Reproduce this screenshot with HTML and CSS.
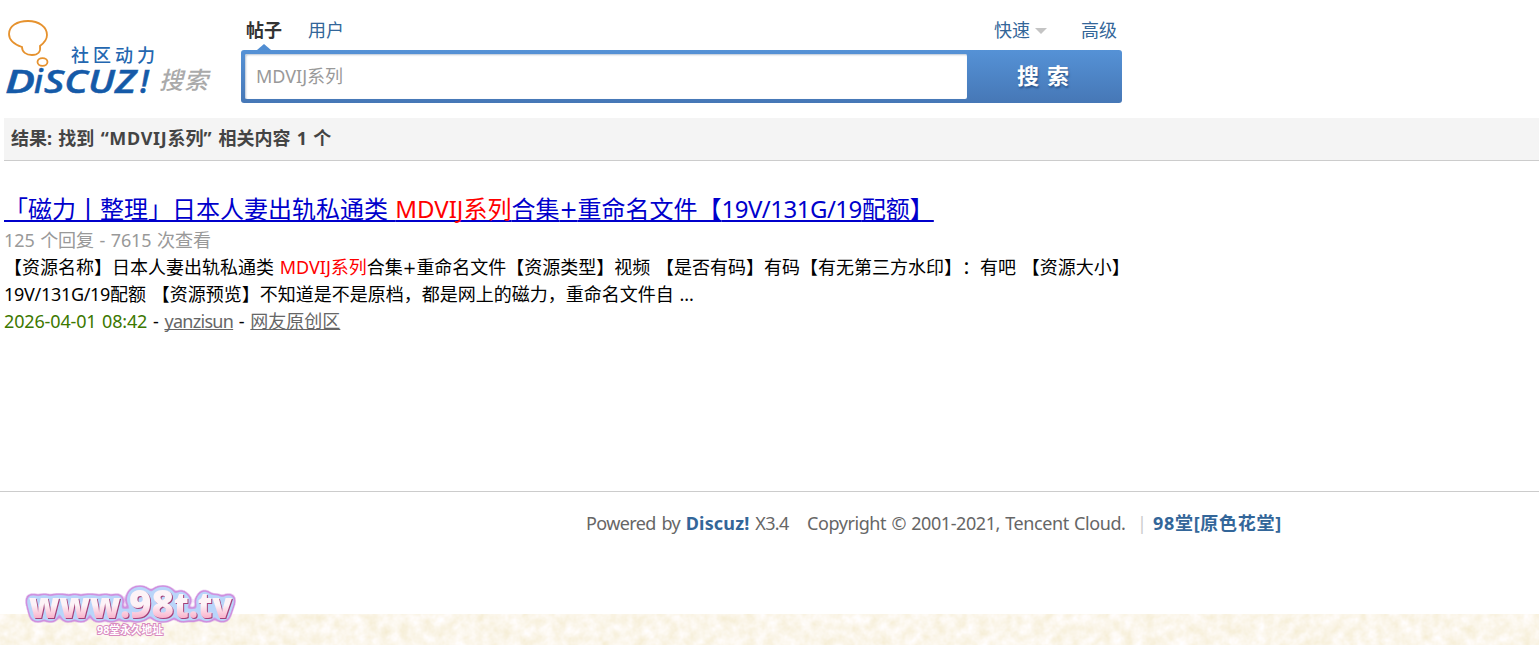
FILE: index.html
```html
<!DOCTYPE html>
<html lang="zh-CN">
<head>
  <meta charset="utf-8">
  <title>搜索 - Discuz!</title>
  <link rel="stylesheet" href="styles.css">
</head>
<body>
  <header class="header">
    <a class="logo" href="#">
      <svg width="220" height="90" viewBox="0 14 220 90">
        <g fill="none" stroke="#e6922e" stroke-width="1.800">
          <path d="M22 47 C13 44 9 39 9 34 C9 26 17 21 28 21 C39 21 47 27 47 35 C47 40 44 43 40 46 C41 52 38 55 32 55 C26 55 22 52 22 47 Z"/>
          <ellipse cx="42.500" cy="62" rx="5" ry="3.800"/>
        </g>
        <g class="logo-name">
          <text x="5" y="93" textLength="30" lengthAdjust="spacingAndGlyphs">D</text>
          <text x="34" y="93">i</text>
          <text x="44" y="93" textLength="92" lengthAdjust="spacingAndGlyphs">SCUZ</text>
          <text x="140" y="93">!</text>
        </g>
        <text class="logo-slogan" x="71" y="62" textLength="84">社区动力</text>
        <text class="logo-search" x="159" y="89" textLength="49">搜索</text>
      </svg>
    </a>
    <form class="search">
      <nav class="tabs">
        <a class="tab active" href="#">帖子</a>
        <a class="tab" href="#">用户</a>
        <a class="tab quick" href="#">快速</a>
        <a class="tab" href="#">高级</a>
      </nav>
      <div class="search-bar">
        <div class="search-input">MDVIJ系列</div>
        <button type="button">搜 索</button>
      </div>
    </form>
  </header>

  <h2 class="result-title">结果: 找到 <span class="kw">“MDVIJ</span>系列<span class="kw">”</span> 相关内容 1 个</h2>

  <main class="result">
    <h3><a href="#">「磁力丨整理」日本人妻出轨私通类 <em>MDVIJ系列</em>合集<span class="plus">+</span>重命名文件【<span class="code">19V/131G/19</span>配额】</a></h3>
    <p class="count">125 个回复 - 7615 次查看</p>
    <p>【资源名称】日本人妻出轨私通类 <em>MDVIJ系列</em>合集<span class="plus">+</span>重命名文件【资源类型】视频 【是否有码】有码【有无第三方水印】：有吧 【资源大小】<br><span class="code">19V/131G/19</span>配额 【资源预览】不知道是不是原档，都是网上的磁力，重命名文件自 ...</p>
    <p class="meta"><span class="date">2026-04-01 08:42</span> - <a class="user" href="#">yanzisun</a> - <a href="#">网友原创区</a></p>
  </main>

  <footer class="footer">
    <span class="powered">Powered by <strong>Discuz!</strong> X3.4</span>
    <span class="copy">Copyright © 2001-2021, Tencent Cloud.</span>
    <span class="pipe">|</span>
    <strong class="site">98堂[原色花堂]</strong>
  </footer>

  <div class="bottom">
    <svg class="texture" width="100%" height="31">
      <filter id="paper" x="0" y="0" width="100%" height="100%" color-interpolation-filters="sRGB">
        <feTurbulence type="fractalNoise" baseFrequency="0.09" numOctaves="3" seed="4"/>
        <feColorMatrix values="0.06 0 0 0 0.955  0.09 0 0 0 0.92  0.22 0 0 0 0.81  0 0 0 0 1"/>
      </filter>
      <rect width="100%" height="31" filter="url(#paper)"/>
    </svg>
    <svg class="site-logo" width="230" height="72" viewBox="15 573 230 72">
      <defs>
        <linearGradient id="pink" gradientUnits="userSpaceOnUse" x1="0" y1="590" x2="0" y2="620">
          <stop offset="0.500" stop-color="#fdf3f7"/>
          <stop offset="1" stop-color="#f9a8c5"/>
        </linearGradient>
        <!-- dark pink edge, blue halo, purple rim -->
        <filter id="outline" filterUnits="userSpaceOnUse" x="15" y="573" width="230" height="60" color-interpolation-filters="sRGB">
          <feOffset in="SourceAlpha" dx="1" dy="0.800" result="edge-shape"/>
          <feGaussianBlur in="SourceAlpha" stdDeviation="3" result="soft"/>
          <feComponentTransfer in="soft" result="big"><feFuncA type="linear" slope="22" intercept="-0.700"/></feComponentTransfer>
          <feComponentTransfer in="soft" result="mid"><feFuncA type="linear" slope="14" intercept="-1.500"/></feComponentTransfer>
          <feFlood flood-color="#cf90df"/><feComposite in2="big" operator="in" result="rim"/>
          <feFlood flood-color="#b9d5fa"/><feComposite in2="mid" operator="in" result="halo"/>
          <feFlood flood-color="#a53f78"/><feComposite in2="edge-shape" operator="in" result="edge"/>
          <feMerge>
            <feMergeNode in="rim"/>
            <feMergeNode in="halo"/>
            <feMergeNode in="edge"/>
            <feMergeNode in="SourceGraphic"/>
          </feMerge>
        </filter>
      </defs>
      <g class="domain" filter="url(#outline)">
        <text x="29" y="618" textLength="101" lengthAdjust="spacingAndGlyphs">www.</text>
        <text class="big" x="129" y="618" textLength="45" lengthAdjust="spacingAndGlyphs">98</text>
        <text class="tail" x="174" y="618" textLength="58" lengthAdjust="spacingAndGlyphs">t.tv</text>
      </g>
      <text class="address" x="97" y="634" textLength="66" lengthAdjust="spacingAndGlyphs">98堂永久地址</text>
    </svg>
  </div>
</body>
</html>
```
FILE: styles.css
```css
* {
  box-sizing: border-box;
}
body {
  margin: 0;
  height: 645px;
  overflow: hidden;
  display: flex;
  flex-direction: column;
  font: 18px/27px "Noto Sans", "Noto Sans CJK SC", sans-serif;
  text-spacing-trim: space-all;
  word-spacing: 1px;
  color: #000;
  background: #fff;
}
h2, h3, p {
  margin: 0;
}
em {
  font-style: normal;
  color: #f00;
}
a {
  color: #369;
  text-decoration: none;
}
.header {
  display: flex;
  height: 118px;
}
.logo {
  width: 241px;
  padding-top: 14px;
}
.logo-name {
  font: italic 600 32px "Open Sans", sans-serif;
  fill: #155aa8;
  stroke: #155aa8;
  stroke-width: 0.5px;
}
.logo-slogan {
  font-size: 18px;
  font-weight: 500;
  fill: #2467b0;
}
.logo-search {
  font-size: 24px;
  font-weight: 500;
  font-style: italic;
  fill: #aaa;
}

/* search form */
.search {
  width: 881px;
}
.tabs {
  display: flex;
  height: 50px;
  padding: 17px 5px 0;
  gap: 26px;
}
.active {
  position: relative;
  font-weight: bold;
  color: #333;
}
.active::after {
  content: "";
  position: absolute;
  left: 11px;
  top: 27px;
  border: 7px solid transparent;
  border-top: 0;
  border-bottom: 6px solid #508dd2;
}
.quick {
  margin-left: auto;
  margin-right: 8px;
}
.quick::after {
  content: "";
  display: inline-block;
  margin-left: 5px;
  vertical-align: 3px;
  border: 6px solid transparent;
  border-bottom: 0;
  border-top-color: #c4c4c4;
}
.search-bar {
  display: flex;
  height: 53px;
  padding: 4px 0 4px 4px;
  border-radius: 3px;
  background: linear-gradient(#5592d6, #4677b6);
}
.search-input {
  width: 722px;
  height: 45px;
  padding: 9px 11px;
  border-radius: 2px;
  background: #fff;
  box-shadow: inset 1px 1px 2px #b9c4d2;
  color: #999;
}
.search-bar button {
  flex: 1;
  padding: 0 3px 5px 0;
  border: 0;
  background: none;
  color: #fff;
  font: bold 22px "Noto Sans CJK SC", sans-serif;
  word-spacing: 3px;
  text-shadow: 1px 2px 2px #2d568c;
}

/* results */
.result-title {
  height: 43px;
  margin-left: 4px;
  padding: 7px;
  border-bottom: 1px solid #ccc;
  background: #f4f4f4;
  font-size: 18px;
  word-spacing: 1.6px;
  color: #444;
}
.kw {
  letter-spacing: 0.7px;
}
.result {
  height: 330px;
  padding: 30px 4px 0;
  white-space: nowrap;
}
.result h3 {
  height: 36px;
  font-size: 24px;
  line-height: 36px;
  font-weight: normal;
}
.result h3 a {
  color: #0000cc;
  text-decoration: underline;
  text-decoration-thickness: 2px;
  text-underline-offset: 2px;
  text-decoration-skip-ink: none;
}
.count {
  letter-spacing: -0.1px;
  color: #999;
}
.plus {
  font-family: "DejaVu Sans Condensed", "DejaVu Sans", sans-serif;
}
.code {
  letter-spacing: -0.3px;
}
h3 .code {
  letter-spacing: -0.5px;
}
.meta .date {
  letter-spacing: -0.15px;
  color: #3c7800;
}
.meta a {
  color: #666;
  text-decoration: underline;
  text-decoration-skip-ink: none;
}
.meta .user {
  letter-spacing: -0.7px;
}

/* footer */
.footer {
  display: flex;
  height: 123px;
  padding: 18px 0 0 586px;
  border-top: 1px solid #ccc;
  white-space: nowrap;
  color: #666;
}
.footer strong {
  color: #369;
}
.powered {
  width: 205px;
  letter-spacing: -0.6px;
  word-spacing: 1.5px;
}
.powered strong {
  letter-spacing: 0.2px;
}
.copy {
  width: 318px;
  margin-left: 16px;
  letter-spacing: -0.42px;
}
.pipe {
  width: 28px;
  padding-left: 12px;
  color: #ccc;
}
.footer .site {
  letter-spacing: 0.7px;
}

.bottom {
  position: relative;
  height: 31px;
  background: #fcf8ee;
}
.texture {
  display: block;
}
.site-logo {
  position: absolute;
  left: 15px;
  top: -41px;
}
.domain {
  font: 800 36px "Open Sans", sans-serif;
  fill: url(#pink);
}
.big {
  font-size: 39px;
}
.tail {
  font-size: 36px;
}
.address {
  font-size: 11px;
  font-weight: bold;
  fill: #fff;
  stroke: #d98ac0;
  stroke-width: 2px;
  paint-order: stroke;
}
```
